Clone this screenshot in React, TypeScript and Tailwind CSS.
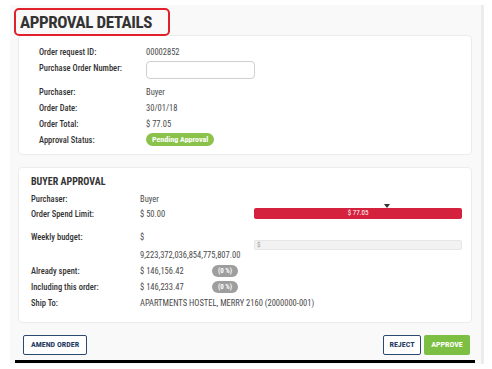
import React from "react";

const font = { fontFamily: '"Roboto Condensed", "Liberation Sans Narrow", Roboto, "Liberation Sans", sans-serif' };

function Label({ children }: { children: React.ReactNode }) {
  return <span className="block text-[8.5px] leading-[12px] font-medium text-[#333]">{children}</span>;
}

function Value({ children }: { children: React.ReactNode }) {
  return <span className="block text-[8.5px] leading-[12px] text-[#4a4a4a]">{children}</span>;
}

function Pill({ children }: { children: React.ReactNode }) {
  return (
    <span className="inline-flex items-center justify-center h-[12px] w-[26px] rounded-full bg-[#9e9e9e] text-white text-[7px] leading-none font-bold">
      {children}
    </span>
  );
}

export default function App() {
  return (
    <div className="w-[492px] h-[369px] bg-white overflow-hidden leading-none" style={font}>
      <div className="ml-[10px] mt-[5px] w-[474px] bg-[#f9f9f9] border-r-[3px] border-[#ececec] pb-[1px]">
        {/* Heading */}
        <div className="ml-[4px] pt-[3px]">
          <div className="relative z-10 inline-flex items-center h-[28px] w-[156px] border-2 border-[#e0202a] rounded-[5px] pl-[4px]">
            <h1 className="text-[17px] font-bold text-[#333] tracking-tight leading-none">APPROVAL DETAILS</h1>
          </div>
        </div>

        {/* Order card */}
        <div className="ml-[8px] -mt-[1px] w-[454px] bg-white border border-[#ececec] rounded-sm pl-[20px] pt-[10px] pb-[8px]">
          <div className="flex">
            <div className="w-[107px]"><Label>Order request ID:</Label></div>
            <Value>00002852</Value>
          </div>
          <div className="flex mt-[3px]">
            <div className="w-[107px] pt-[1px]"><Label>Purchase Order Number:</Label></div>
            <input className="block w-[109px] h-[18px] border border-[#cfcfcf] rounded-sm bg-white outline-none" />
          </div>
          <div className="flex mt-[7px]">
            <div className="w-[107px]"><Label>Purchaser:</Label></div>
            <Value>Buyer</Value>
          </div>
          <div className="flex mt-[4px]">
            <div className="w-[107px]"><Label>Order Date:</Label></div>
            <Value>30/01/18</Value>
          </div>
          <div className="flex mt-[4px]">
            <div className="w-[107px]"><Label>Order Total:</Label></div>
            <Value>$ 77.05</Value>
          </div>
          <div className="flex items-center mt-[3px]">
            <div className="w-[107px]"><Label>Approval Status:</Label></div>
            <span className="inline-flex items-center h-[13px] px-[6px] rounded-full bg-[#8bc34a] text-white text-[8px] leading-none font-bold">
              Pending Approval
            </span>
          </div>
        </div>

        {/* Buyer approval card */}
        <div className="ml-[8px] mt-[12px] w-[454px] bg-white border border-[#ececec] rounded-sm pl-[12px] pr-[9px] pt-[8px] pb-[13px]">
          <div className="text-[10px] leading-[12px] font-bold text-[#333]">BUYER APPROVAL</div>
          <div className="flex mt-[5px]">
            <div className="w-[109px]"><Label>Purchaser:</Label></div>
            <Value>Buyer</Value>
          </div>
          <div className="flex mt-[3px]">
            <div className="w-[109px]"><Label>Order Spend Limit:</Label></div>
            <div className="w-[114px]"><Value>$ 50.00</Value></div>
            <div className="relative flex-1 h-[11px] bg-[#d4213d] rounded-[2px] flex items-center justify-center">
              <span className="text-[7px] leading-none text-white">$ 77.05</span>
              <span className="absolute -top-[4px] left-[130px] w-0 h-0 border-l-[3px] border-r-[3px] border-t-[4px] border-l-transparent border-r-transparent border-t-[#333]" />
            </div>
          </div>
          <div className="flex mt-[11px]">
            <div className="w-[109px]"><Label>Weekly budget:</Label></div>
            <div className="w-[114px] flex flex-col">
              <Value>$</Value>
              <div className="mt-[6px]"><Value>9,223,372,036,854,775,807.00</Value></div>
            </div>
            <div className="flex-1 mt-[9px] h-[10px] bg-[#f2f2f2] border border-[#e6e6e6] rounded-[2px] flex items-center pl-[2px]">
              <span className="text-[7px] leading-none text-[#999]">$</span>
            </div>
          </div>
          <div className="flex items-center mt-[4px]">
            <div className="w-[109px]"><Label>Already spent:</Label></div>
            <div className="w-[72px]"><Value>$ 146,156.42</Value></div>
            <Pill>(0 %)</Pill>
          </div>
          <div className="flex items-center mt-[4px]">
            <div className="w-[109px]"><Label>Including this order:</Label></div>
            <div className="w-[72px]"><Value>$ 146,233.47</Value></div>
            <Pill>(0 %)</Pill>
          </div>
          <div className="flex mt-[4px]">
            <div className="w-[109px]"><Label>Ship To:</Label></div>
            <Value>APARTMENTS HOSTEL, MERRY 2160 (2000000-001)</Value>
          </div>
        </div>

        {/* Actions */}
        <div className="flex items-center mt-[12px] pl-[13px] pr-[11px]">
          <button className="h-[20px] w-[64px] border border-[#2b4a6f] rounded-[2px] bg-white text-[8px] leading-none font-bold text-[#1f3a5f]">
            AMEND ORDER
          </button>
          <div className="flex-1" />
          <button className="h-[20px] w-[38px] border border-[#2b4a6f] rounded-[2px] bg-white text-[8px] leading-none font-bold text-[#1f3a5f]">
            REJECT
          </button>
          <button className="ml-[3px] h-[20px] w-[46px] rounded-[2px] bg-[#7cbf42] text-[8px] leading-none font-bold text-white">
            APPROVE
          </button>
        </div>
        <div className="ml-[5px] mt-[5px] w-[460px] h-[3px] bg-black" />
      </div>
    </div>
  );
}
